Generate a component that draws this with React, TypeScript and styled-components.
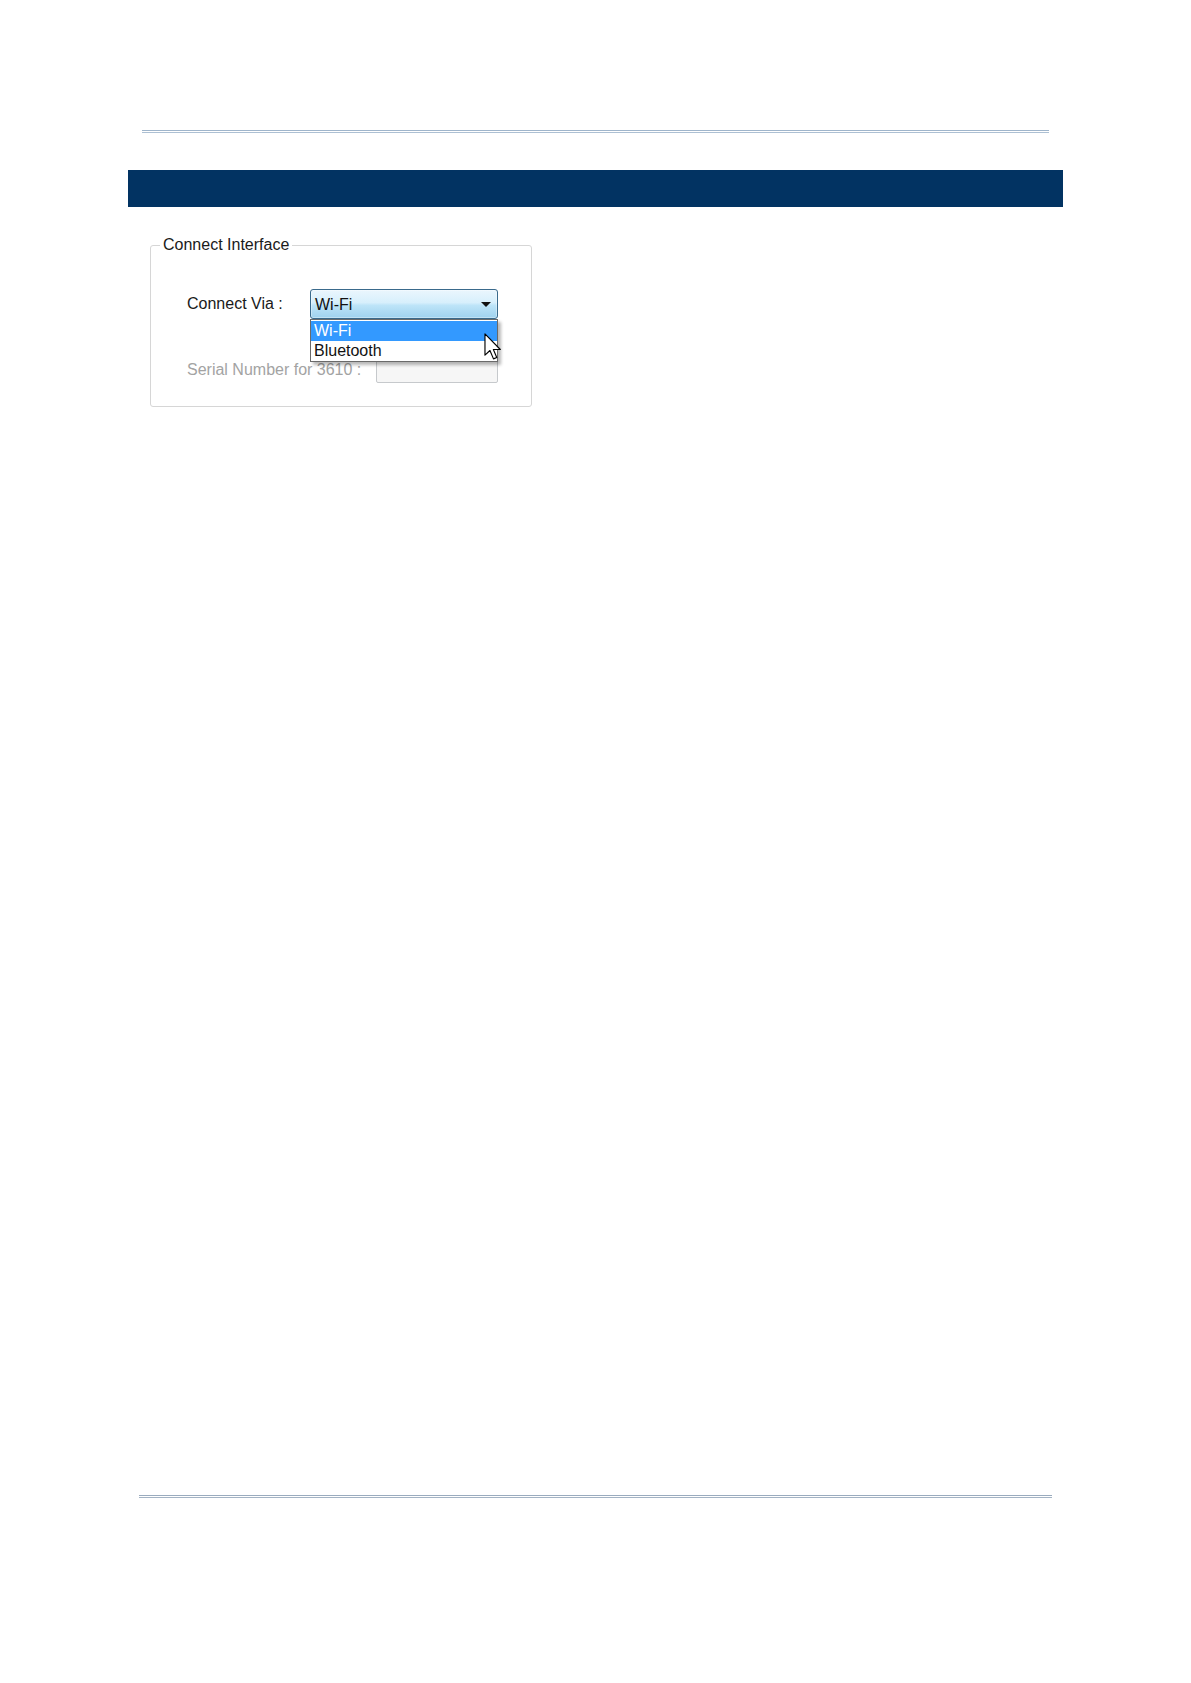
import React from "react";
import styled, { createGlobalStyle } from "styled-components";

const GlobalStyle = createGlobalStyle`
  html, body { margin: 0; padding: 0; background: #ffffff; }
  body { font-family: "Liberation Sans", Arial, sans-serif; }
  * { box-sizing: border-box; }
`;

const Page = styled.div`
  width: 1191px;
  min-height: 1683px;
  padding: 130px 0 185px 0;
  display: flex;
  flex-direction: column;
  background: #ffffff;
`;

const Rule = styled.div<{ $left: number; $width: number }>`
  margin-left: ${(p) => p.$left}px;
  width: ${(p) => p.$width}px;
  height: 3px;
  border-top: 1px solid #9fb5cb;
  border-bottom: 1px solid #adc0d3;
`;

const FooterRule = styled(Rule)`
  margin-top: auto;
  border-top-color: #9aabbe;
  border-bottom-color: #a3b3c4;
`;

const SectionBar = styled.div`
  margin: 37px 0 0 128px;
  width: 935px;
  height: 37px;
  background: #023362;
`;

const GroupBox = styled.fieldset`
  margin: 29px 0 0 150px;
  width: 382px;
  border: 1px solid #d6d6d6;
  border-radius: 3px;
  padding: 0 0 23px 0;
  min-inline-size: 0;
`;

const Legend = styled.legend`
  margin-left: 9px;
  padding: 0 3px;
  font-size: 16px;
  line-height: 18px;
  color: #1a1a1a;
`;

const Form = styled.div`
  display: flex;
  flex-direction: column;
  gap: 37px;
  padding: 35px 0 0 36px;
`;

const Row = styled.div`
  display: flex;
  align-items: center;
`;

const Label = styled.span<{ $width: number; $disabled?: boolean }>`
  width: ${(p) => p.$width}px;
  flex: none;
  font-size: 16px;
  line-height: 18px;
  color: ${(p) => (p.$disabled ? "#a3a3a3" : "#1a1a1a")};
  white-space: nowrap;
`;

const ComboWrap = styled.div`
  position: relative;
  width: 188px;
  height: 30px;
`;

const Combo = styled.div`
  width: 100%;
  height: 100%;
  display: flex;
  align-items: center;
  justify-content: space-between;
  padding: 2px 6px 0 4px;
  border: 1px solid #3a6a8c;
  border-radius: 3px;
  background: linear-gradient(
    to bottom,
    #eaf6fd 0%,
    #d7effc 45%,
    #bde4f8 55%,
    #9fd2ef 100%
  );
  box-shadow: inset 0 0 0 1px rgba(255, 255, 255, 0.35);
  font-size: 16px;
  color: #111111;
`;

const Arrow = styled.span`
  width: 0;
  height: 0;
  border-left: 5.5px solid transparent;
  border-right: 5.5px solid transparent;
  border-top: 5px solid #111111;
  margin-top: -1px;
`;

const ListBox = styled.ul`
  position: absolute;
  top: 100%;
  left: 0;
  width: 188px;
  margin: 0;
  padding: 1px 0;
  list-style: none;
  background: #ffffff;
  border: 1px solid #6a6a6a;
  box-shadow: 3px 3px 3px rgba(0, 0, 0, 0.28);
  z-index: 2;
`;

const Option = styled.li<{ $selected?: boolean }>`
  height: 19.5px;
  padding-left: 3px;
  font-size: 16px;
  line-height: 20px;
  background: ${(p) => (p.$selected ? "#3399ff" : "transparent")};
  color: ${(p) => (p.$selected ? "#ffffff" : "#111111")};
`;

const Pointer = styled.svg`
  position: absolute;
  left: 174px;
  top: 44px;
  width: 18px;
  height: 27px;
  z-index: 3;
  overflow: visible;
`;

const TextBox = styled.div`
  width: 122px;
  height: 27px;
  border: 1px solid #c6c9cc;
  border-radius: 2px;
  background: #f6f6f6;
`;

export default function App() {
  return (
    <>
      <GlobalStyle />
      <Page>
        <Rule $left={142} $width={907} />
        <SectionBar />
        <GroupBox>
          <Legend>Connect Interface</Legend>
          <Form>
            <Row>
              <Label $width={123}>Connect Via :</Label>
              <ComboWrap>
                <Combo>
                  <span>Wi-Fi</span>
                  <Arrow />
                </Combo>
                <ListBox>
                  <Option $selected>Wi-Fi</Option>
                  <Option>Bluetooth</Option>
                </ListBox>
                <Pointer viewBox="0 0 12.5 19">
                  <path
                    d="M0.6 0.6 V15.6 L4.1 12.3 L6.6 18.2 L8.9 17.2 L6.5 11.6 H11.4 Z"
                    fill="#ffffff"
                    stroke="#000000"
                    strokeWidth="0.8"
                    strokeLinejoin="round"
                  />
                </Pointer>
              </ComboWrap>
            </Row>
            <Row>
              <Label $width={189} $disabled>
                Serial Number for 3610 :
              </Label>
              <TextBox />
            </Row>
          </Form>
        </GroupBox>
        <FooterRule $left={139} $width={913} />
      </Page>
    </>
  );
}
